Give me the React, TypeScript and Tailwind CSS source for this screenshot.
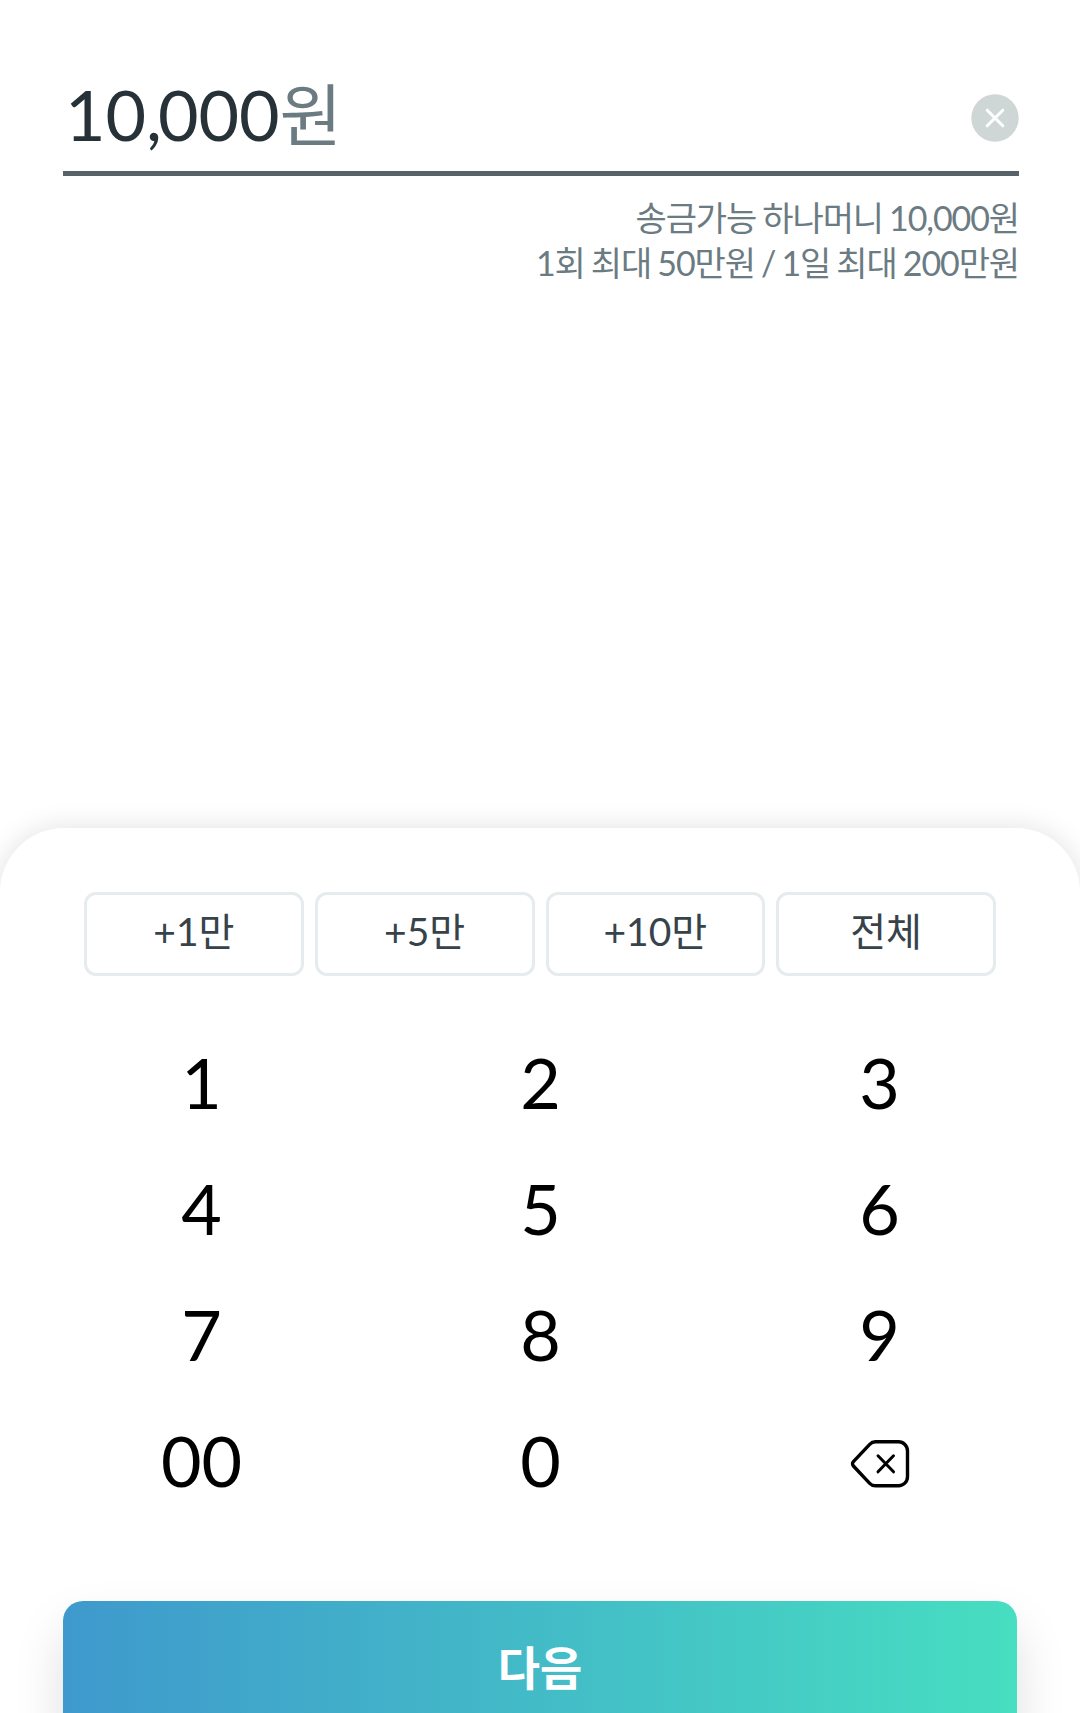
const AMOUNTS = ["+1만", "+5만", "+10만", "전체"];
const KEYS = ["1", "2", "3", "4", "5", "6", "7", "8", "9", "00", "0", "back"];

function ClearIcon() {
  return (
    <svg viewBox="0 0 48 48" className="mt-px h-12 w-12" fill="none">
      <circle cx="24" cy="24" r="23.7" fill="#cfd6d6" />
      <path d="M16.2 16.2l15.6 15.6M31.8 16.2L16.2 31.8" stroke="#fff" strokeWidth="3" strokeLinecap="round" />
    </svg>
  );
}

function BackspaceIcon() {
  return (
    <svg
      viewBox="0 0 60 50"
      className="mt-2 h-[50px] w-[60px]"
      fill="none"
      stroke="#000"
      strokeWidth="3.4"
      strokeLinecap="round"
      strokeLinejoin="round"
    >
      <path d="M25.5 2.8H48.5a9 9 0 0 1 9 9v26a9 9 0 0 1-9 9H25.5a8 8 0 0 1-5.8-2.5L3.4 27a3.2 3.2 0 0 1 0-4.4L19.7 5.3a8 8 0 0 1 5.8-2.5Z" />
      <path d="M28 16.8l15.5 16M43.5 16.8l-15.5 16" strokeWidth="3" />
    </svg>
  );
}

export default function App() {
  return (
    <div className="flex h-[1713px] w-[1080px] flex-col overflow-hidden bg-white font-[Lato,'Noto_Sans_CJK_KR',sans-serif]">
      <header className="h-[828px] shrink-0 pt-[68px] pr-[61px] pl-[63px]">
        <div className="flex h-[108px] items-center justify-between border-b-[5px] border-[#56646a] pb-[5px]">
          <p className="pb-1.5 pl-0.5 text-[70px] leading-[100px] tracking-[-0.1px] text-[#263238]">
            10<span className="tracking-[-4px]">,</span>000
            <span className="text-[68px] text-[#6b7b82]">원</span>
          </p>
          <ClearIcon />
        </div>
        <div className="pt-[19px] text-right text-[34px] leading-[45px] tracking-[-1.1px] text-[#6b7b82] [word-spacing:-1.5px]">
          <p>송금가능 하나머니 10,000원</p>
          <p>1회 최대 50만원 / 1일 최대 200만원</p>
        </div>
      </header>
      <section className="flex-1 rounded-t-[64px] bg-white px-[63px] pt-16 shadow-[0_0_28px_rgba(0,0,0,0.12)]">
        <div className="grid grid-cols-4 gap-[11px] px-[21px]">
          {AMOUNTS.map((label) => (
            <button key={label} className="h-[84px] rounded-xl border-3 border-[#e6ecee] pb-1.5 text-[39px] text-[#37434a]">
              {label}
            </button>
          ))}
        </div>
        <div className="-mr-8 -ml-[31px] mt-[43px] grid h-[504px] grid-cols-3 grid-rows-4 text-[70px] text-black">
          {KEYS.map((key) => (
            <button key={key} className="flex items-center justify-center">
              {key === "back" ? <BackspaceIcon /> : key}
            </button>
          ))}
        </div>
        <button className="mt-[78px] h-[140px] w-[954px] rounded-t-[20px] bg-linear-to-r/srgb from-[#3f99cd] to-[#47dec1] pb-2 text-[46px] font-bold text-white shadow-[0_26px_50px_rgba(0,0,0,0.13)]">
          다음
        </button>
      </section>
    </div>
  );
}
